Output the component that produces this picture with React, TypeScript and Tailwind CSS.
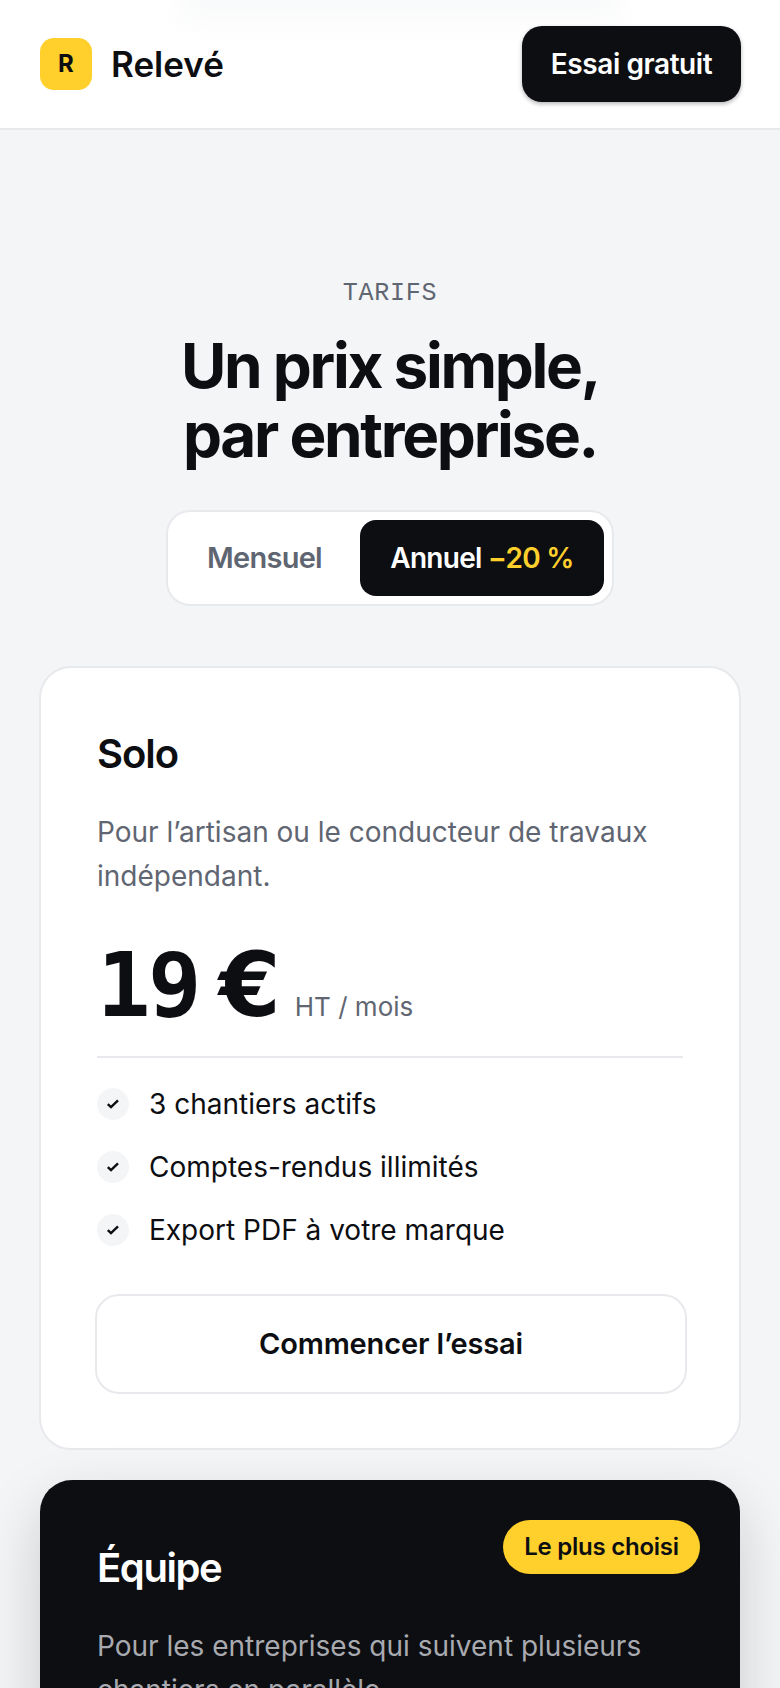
import React from 'react'

const sans = "font-['Inter','Liberation_Sans',sans-serif]"

const soloFeatures = ['3 chantiers actifs', 'Comptes-rendus illimités', 'Export PDF à votre marque']

function CheckBullet() {
  return (
    <span className="flex h-8 w-8 shrink-0 items-center justify-center rounded-full bg-[#f4f5f7]">
      <svg width="14" height="14" viewBox="0 0 14 14" fill="none">
        <path d="M1.8 7.2 5 10.2 12 3.4" stroke="#0d0e12" strokeWidth="2.4" />
      </svg>
    </span>
  )
}

export default function App() {
  return (
    <div className={`${sans} h-[1688px] overflow-hidden bg-[#f4f5f7] text-[#0d0e12]`}>
      {/* Header */}
      <header className="relative flex h-[130px] items-center justify-between overflow-hidden border-b-2 border-[#e8e9ec] bg-white pl-10 pr-[39px]">
        <div className="absolute left-[180px] top-[-14px] h-[34px] w-[440px] bg-[#f4f5f7]/60 blur-[14px]" />
        <div className="relative flex items-center gap-[19px]">
          <div className="flex h-[52px] w-[52px] items-center justify-center rounded-[14px] bg-[#ffd02b] text-[24px] font-bold">R</div>
          <span className="text-[35px] font-semibold">Relevé</span>
        </div>
        <button className="relative flex h-[76px] w-[219px] items-center justify-center rounded-[20px] bg-[#0d0e12] text-[28px] font-semibold tracking-[-0.015em] text-white shadow-[0_2px_4px_rgba(13,14,18,0.3)]">
          Essai gratuit
        </button>
      </header>

      <main className="flex flex-col items-center px-10 pt-[148px]">
        <div className="font-['Liberation_Mono',monospace] text-[25px] leading-[32px] tracking-[0.03em] text-[#5f6672]">TARIFS</div>
        <h1 className="mt-[21px] text-center text-[62px] font-bold leading-[69px] tracking-[-0.037em]">
          Un prix simple,
          <br />
          par entreprise.
        </h1>

        {/* Toggle */}
        <div className="mt-[41px] flex h-[96px] w-[448px] items-center justify-between rounded-[24px] border-2 border-[#e8e9ec] bg-white px-2">
          <span className="pl-[31px] text-[29px] font-semibold tracking-[-0.025em] text-[#5f6672]">Mensuel</span>
          <span className="flex h-[76px] w-[244px] items-center justify-center rounded-[16px] bg-[#0d0e12] text-[28px] font-semibold tracking-[-0.025em] text-white">
            Annuel&nbsp;<span className="text-[#ffd02b]">−20 %</span>
          </span>
        </div>

        {/* Solo */}
        <section className="mt-[60px] h-[784px] w-[702px] shrink-0 rounded-[32px] border-2 border-[#e8e9ec] bg-white px-[56px] pt-[62px]">
          <h2 className="text-[40px] font-semibold leading-[48px] tracking-[-0.025em]">Solo</h2>
          <p className="mt-[32px] text-[28px] leading-[44px] text-[#5f6672]">
            Pour l’artisan ou le conducteur de travaux indépendant.
          </p>
          <div className="mt-[39px] flex items-baseline gap-[14px] border-b-2 border-[#e8e9ec] pb-[23px]">
            <span className="font-['DejaVu_Sans_Mono',monospace] text-[89px] font-bold leading-[96px] tracking-[-0.03em]">
              19<span className="font-['DejaVu_Sans',sans-serif] tracking-normal [word-spacing:-11px]"> €</span>
            </span>
            <span className="text-[26px] text-[#5f6672]">HT / mois</span>
          </div>
          <ul className="mt-[30px] flex flex-col gap-[31px]">
            {soloFeatures.map((feature) => (
              <li key={feature} className="flex h-[32px] items-center gap-[20px] text-[28px]">
                <CheckBullet />
                {feature}
              </li>
            ))}
          </ul>
          <button className="-mx-[2px] mt-[48px] flex h-[100px] w-[592px] items-center justify-center rounded-[24px] border-2 border-[#e8e9ec] bg-white text-[29px] font-semibold tracking-[-0.005em]">
            Commencer l’essai
          </button>
        </section>

        {/* Equipe */}
        <section className="relative mt-[30px] h-[600px] w-[700px] shrink-0 rounded-[32px] bg-[#0d0e12] px-[57px] pt-[64px] text-white shadow-[0_24px_60px_rgba(13,14,18,0.18)]">
          <span className="absolute right-[40px] top-[40px] flex h-[54px] w-[197px] items-center justify-center rounded-full bg-[#ffd02b] text-[24px] font-semibold tracking-[-0.01em] text-[#0d0e12]">
            Le plus choisi
          </span>
          <h2 className="text-[40px] font-semibold leading-[48px] tracking-[-0.035em]">Équipe</h2>
          <p className="mt-[32px] text-[28px] leading-[44px] text-[#a8aab0]">
            Pour les entreprises qui suivent plusieurs chantiers en parallèle.
          </p>
        </section>
      </main>
    </div>
  )
}
